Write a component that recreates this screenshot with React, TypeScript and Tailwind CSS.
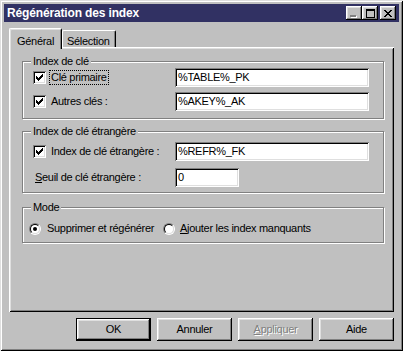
import React from 'react';

const raised =
  'shadow-[inset_-1px_-1px_0_#000,inset_1px_1px_0_#fff,inset_-2px_-2px_0_#808080,inset_2px_2px_0_#dfdfdf]';
const sunken =
  'shadow-[inset_1px_1px_0_#808080,inset_-1px_-1px_0_#fff,inset_2px_2px_0_#000,inset_-2px_-2px_0_#dfdfdf]';
const etched =
  'border border-[#808080] shadow-[1px_1px_0_#fff,inset_1px_1px_0_#fff]';

function TitleButton({ children }: { children: React.ReactNode }) {
  return (
    <div className={`w-[16px] h-[14px] bg-[#c0c0c0] flex items-center justify-center ${raised}`}>
      {children}
    </div>
  );
}

function CheckBox() {
  return (
    <div className={`w-[13px] h-[13px] bg-white flex items-center justify-center shrink-0 ${sunken}`}>
      <svg width="7" height="7" viewBox="0 0 7 7">
        <path d="M0 2h1v1h1v1h1V3h1V2h1V1h1V0h1v3H6v1H5v1H4v1H3v1H2V6H1V5H0z" fill="#000" />
      </svg>
    </div>
  );
}

function Radio({ checked }: { checked?: boolean }) {
  return (
    <div className="w-[12px] h-[12px] rounded-full border border-t-[#808080] border-l-[#808080] border-b-white border-r-white shrink-0">
      <div className="w-full h-full rounded-full bg-white border border-t-black border-l-black border-b-[#dfdfdf] border-r-[#dfdfdf] flex items-center justify-center">
        {checked && <div className="w-[4px] h-[4px] rounded-full bg-black" />}
      </div>
    </div>
  );
}

function Field({ value, width }: { value: string; width: string }) {
  return (
    <div className={`${width} h-[19px] bg-white pl-[3px] flex items-center ${sunken}`}>
      {value}
    </div>
  );
}

function Button({ label, primary, disabled }: { label: React.ReactNode; primary?: boolean; disabled?: boolean }) {
  if (primary) {
    return (
      <div className="w-[75px] h-[23px] border border-black">
        <div className={`w-full h-full flex items-center justify-center ${raised}`}>{label}</div>
      </div>
    );
  }
  return (
    <div
      className={`w-[75px] h-[23px] flex items-center justify-center ${raised} ${
        disabled ? 'text-[#808080] [text-shadow:1px_1px_0_#fff]' : ''
      }`}
    >
      {label}
    </div>
  );
}

export default function App() {
  return (
    <div className="w-[403px] h-[351px] bg-[#c0c0c0] font-['Liberation_Sans',Arial,sans-serif] text-[11px] tracking-[-0.3px] text-black whitespace-nowrap">
      <div className="w-full h-full p-[4px] shadow-[inset_1px_1px_0_#dfdfdf,inset_-1px_-1px_0_#000,inset_2px_2px_0_#fff,inset_-2px_-2px_0_#808080]">
        {/* barre de titre */}
        <div className="h-[18px] bg-[#313163] flex items-center pl-[3px] pr-[3px]">
          <span className="text-white font-bold text-[12px] tracking-[-0.15px]">Régénération des index</span>
          <div className="ml-auto flex items-center">
            <TitleButton>
              <div className="w-[6px] h-[2px] bg-[#808080] mt-[6px] ml-[-2px] shadow-[1px_1px_0_#fff]" />
            </TitleButton>
            <TitleButton>
              <div className="w-[9px] h-[9px] border border-black border-t-2" />
            </TitleButton>
            <div className="w-[2px]" />
            <TitleButton>
              <svg width="8" height="7" viewBox="0 0 8 7">
                <path d="M0 0h2v1h1v1h2V1h1V0h2v1H7v1H6v1H5v1h1v1h1v1h1v1H6V6H5V5H3v1H2v1H0V6h1V5h1V4h1V3H2V2H1V1H0z" fill="#000" />
              </svg>
            </TitleButton>
          </div>
        </div>

        {/* onglets */}
        <div className="mt-[6px] ml-[5px] h-[19px] flex items-end">
          <div className="relative z-10 w-[53px] h-[21px] mb-[-2px] bg-[#c0c0c0] border-t border-l border-white border-r border-r-black rounded-t-[2px] shadow-[inset_1px_1px_0_#dfdfdf,inset_-1px_0_0_#808080] pl-[7px] pt-[4px]">
            Général
          </div>
          <div className="w-[54px] h-[17px] border-t border-l border-white border-r border-r-black rounded-t-[2px] shadow-[inset_-1px_0_0_#808080] pl-[4px] pt-[2px]">
            Sélection
          </div>
        </div>

        {/* panneau */}
        <div className="ml-[5px] w-[385px] h-[265px] pt-[8px] pl-[13px] shadow-[inset_1px_1px_0_#fff,inset_-1px_-1px_0_#000,inset_2px_2px_0_#dfdfdf,inset_-2px_-2px_0_#808080]">
          <fieldset className={`w-[362px] h-[64px] ${etched}`}>
            <legend className="ml-[8px] px-[2px] h-[13px] leading-[13px] bg-[#c0c0c0]">Index de clé</legend>
            <div className="flex items-center h-[19px]">
              <div className="w-[152px] flex items-center pl-[10px]">
                <CheckBox />
                <span className="ml-[3px] px-[1px] leading-[13px] border border-dotted border-black">Clé primaire</span>
              </div>
              <Field value="%TABLE%_PK" width="w-[194px]" />
            </div>
            <div className="flex items-center h-[19px] mt-[5px]">
              <div className="w-[152px] flex items-center pl-[10px]">
                <CheckBox />
                <span className="ml-[5px]">Autres clés :</span>
              </div>
              <Field value="%AKEY%_AK" width="w-[194px]" />
            </div>
          </fieldset>

          <fieldset className={`mt-[6px] w-[362px] h-[68px] pt-[4px] ${etched}`}>
            <legend className="ml-[8px] px-[2px] h-[13px] leading-[13px] bg-[#c0c0c0]">Index de clé étrangère</legend>
            <div className="flex items-center h-[19px]">
              <div className="w-[152px] flex items-center pl-[10px]">
                <CheckBox />
                <span className="ml-[5px]">Index de clé étrangère :</span>
              </div>
              <Field value="%REFR%_FK" width="w-[194px]" />
            </div>
            <div className="flex items-center h-[19px] mt-[7px]">
              <div className="w-[152px] pl-[12px]">
                <span className="underline">S</span>euil de clé étrangère :
              </div>
              <Field value="0" width="w-[64px]" />
            </div>
          </fieldset>

          <fieldset className={`mt-[8px] w-[362px] h-[42px] pt-[5px] ${etched}`}>
            <legend className="ml-[8px] px-[2px] h-[13px] leading-[13px] bg-[#c0c0c0]">Mode</legend>
            <div className="flex items-center h-[19px]">
              <div className="w-[140px] flex items-center pl-[6px]">
                <Radio checked />
                <span className="ml-[6px]">Supprimer et régénérer</span>
              </div>
              <Radio />
              <span className="ml-[5px]">
                <span className="underline">A</span>jouter les index manquants
              </span>
            </div>
          </fieldset>
        </div>

        {/* boutons */}
        <div className="mt-[6px] ml-[5px] w-[385px] flex justify-end gap-[6px]">
          <Button label="OK" primary />
          <Button label="Annuler" />
          <Button
            label={
              <span>
                <span className="underline">A</span>ppliquer
              </span>
            }
            disabled
          />
          <Button label="Aide" />
        </div>
      </div>
    </div>
  );
}
